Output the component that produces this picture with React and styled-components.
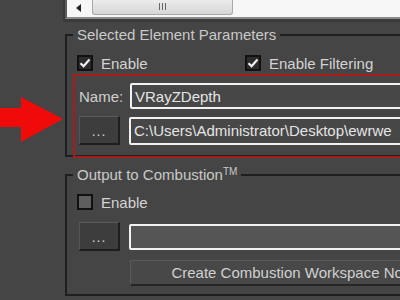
import React from "react";
import styled, { createGlobalStyle } from "styled-components";

const Global = createGlobalStyle`
  html, body { margin: 0; padding: 0; background: #454545; overflow: hidden; }
  body { font-family: "Liberation Sans", Arial, sans-serif; font-size: 15px; color: #d6d6d6; }
`;

const Page = styled.div`
  display: flex;
  width: 400px;
  height: 300px;
  overflow: hidden;
  background: #454545;
`;

const Gutter = styled.div`
  flex: 0 0 65px;
  display: flex;
  flex-direction: column;
  padding-top: 97px;
`;

const Main = styled.div`
  flex: 0 0 480px;
  width: 480px;
  display: flex;
  flex-direction: column;
`;

const TopPanel = styled.div`
  height: 17px;
  background: #f7f7f7;
  border-left: 2px solid #5c5c5c;
  border-bottom: 2px solid #8c8c8c;
  box-shadow: 0 1px 0 2px #3a3a3a;
  display: flex;
  align-items: flex-start;
  padding-left: 9px;
  gap: 11px;
`;

const ArrowLeft = styled.div`
  width: 0;
  height: 0;
  margin-top: 4px;
  border-top: 4px solid transparent;
  border-bottom: 4px solid transparent;
  border-right: 5px solid #222;
`;

const Thumb = styled.div`
  width: 141px;
  height: 15px;
  box-sizing: border-box;
  border: 1px solid #a8a8a8;
  border-top: none;
  border-radius: 0 0 3px 3px;
  background: linear-gradient(#ececec, #d6d6d6);
  display: flex;
  justify-content: center;
  gap: 2px;
  padding-top: 3px;
`;

const Grip = styled.span`
  width: 1px;
  height: 7px;
  background: #666;
`;

const Group = styled.fieldset`
  margin: ${(p) => p.$top}px 0 0 0;
  padding: ${(p) => p.$padTop}px 0 ${(p) => p.$padBottom}px 6px;
  border: 2px solid #1f1f1f;
  min-width: 0;
`;

const Legend = styled.legend`
  margin-left: 0;
  padding: 0 4px 0 4px;
  font-size: 15px;
  line-height: 16px;
  color: #c9c9c9;
`;

const Sup = styled.sup`
  font-size: 10px;
  vertical-align: 5px;
  line-height: 0;
`;

const CheckRow = styled.div`
  display: flex;
  align-items: center;
  height: 16px;
  padding-left: 4px;
`;

const CheckItem = styled.label`
  display: flex;
  align-items: center;
  gap: 8px;
  width: ${(p) => p.$width || "auto"};
  color: #d4d4d4;
`;

const Box = styled.span`
  width: 16px;
  height: 16px;
  box-sizing: border-box;
  border: 2px solid #111;
  background: ${(p) => (p.$checked ? "#2c2c2c" : "#5e5e5e")};
  display: flex;
  align-items: center;
  justify-content: center;
`;

const RedFrame = styled.div`
  margin: 3px 0 -3px 0;
  border: 2px solid #a51c1c;
  padding: 7px 0 11px 4px;
  display: flex;
  flex-direction: column;
  gap: 7px;
`;

const Row = styled.div`
  display: flex;
  align-items: center;
  gap: 9px;
`;

const Label = styled.span`
  width: 42px;
  color: #cfcfcf;
`;

const Field = styled.div`
  flex: 0 0 330px;
  height: ${(p) => p.$h}px;
  box-sizing: border-box;
  border: 2px solid #f2f2f2;
  border-radius: 2px;
  background: ${(p) => p.$bg || "#474747"};
  color: #e4e4e4;
  padding-left: 3px;
  display: flex;
  align-items: center;
  white-space: nowrap;
  overflow: hidden;
`;

const DotsButton = styled.div`
  width: 41px;
  height: 29px;
  box-sizing: border-box;
  background: #3d3d3d;
  border-top: 1px solid #5a5a5a;
  border-left: 1px solid #555;
  border-right: 2px solid #1e1e1e;
  border-bottom: 2px solid #1e1e1e;
  display: flex;
  align-items: center;
  justify-content: center;
  color: #cfcfcf;
  font-size: 14px;
  letter-spacing: 1px;
  padding-top: 2px;
`;

const Stack = styled.div`
  display: flex;
  flex-direction: column;
  padding-left: 6px;
  margin-top: ${(p) => p.$top}px;
  gap: 9px;
`;

const WideButton = styled.div`
  width: 330px;
  height: 26px;
  margin-left: 51px;
  box-sizing: border-box;
  background: #484848;
  border-top: 1px solid #5a5a5a;
  border-left: 1px solid #5a5a5a;
  border-bottom: 2px solid #262626;
  display: flex;
  align-items: center;
  justify-content: center;
  color: #d0d0d0;
  white-space: nowrap;
`;

const Check = () => (
  <svg width="12" height="12" viewBox="0 0 12 12">
    <path d="M1.5 6.2 L4.6 9.2 L10.5 2.5" fill="none" stroke="#f4f4f4" strokeWidth="2.2" />
  </svg>
);

const RedArrow = () => (
  <svg width="65" height="46" viewBox="0 0 65 46">
    <polygon points="0,11 21,11 21,0 63,22 21,45 21,30 0,30" fill="#f00a0a" />
  </svg>
);

export default function App() {
  return (
    <>
      <Global />
      <Page>
        <Gutter>
          <RedArrow />
        </Gutter>
        <Main>
          <TopPanel>
            <ArrowLeft />
            <Thumb>
              <Grip />
              <Grip />
              <Grip />
            </Thumb>
          </TopPanel>
          <Group $top={8} $padTop={12} $padBottom={0}>
            <Legend>Selected Element Parameters</Legend>
            <CheckRow>
              <CheckItem $width="168px">
                <Box $checked>
                  <Check />
                </Box>
                Enable
              </CheckItem>
              <CheckItem>
                <Box $checked>
                  <Check />
                </Box>
                Enable Filtering
              </CheckItem>
            </CheckRow>
            <RedFrame>
              <Row>
                <Label>Name:</Label>
                <Field $h={26}>VRayZDepth</Field>
              </Row>
              <Row>
                <DotsButton>...</DotsButton>
                <Field $h={28}>C:\Users\Administrator\Desktop\ewrwe</Field>
              </Row>
            </RedFrame>
          </Group>
          <Group $top={10} $padTop={11} $padBottom={8}>
            <Legend>
              Output to Combustion<Sup>TM</Sup>
            </Legend>
            <CheckRow>
              <CheckItem>
                <Box />
                Enable
              </CheckItem>
            </CheckRow>
            <Stack $top={12}>
              <Row>
                <DotsButton>...</DotsButton>
                <Field $h={26} $bg="#555555" />
              </Row>
              <WideButton>Create Combustion Workspace Node</WideButton>
            </Stack>
          </Group>
        </Main>
      </Page>
    </>
  );
}
